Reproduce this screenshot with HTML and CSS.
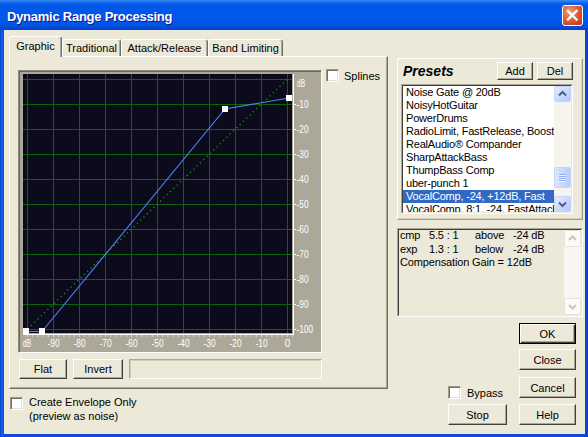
FILE: index.html
```html
<!DOCTYPE html>
<html>
<head>
<meta charset="utf-8">
<title>Dynamic Range Processing</title>
<link rel="stylesheet" href="styles.css">
</head>
<body>
<div class="window">
  <div class="titlebar">
    <span class="title">Dynamic Range Processing</span>
    <div class="close">
      <svg width="19" height="19" viewBox="0 0 19 19"><path d="M5 5 L13.5 13.5 M13.5 5 L5 13.5" stroke="#fff" stroke-width="2.4" stroke-linecap="square" fill="none"/></svg>
    </div>
  </div>
  <div class="client">
    <div class="left">
      <div class="tabs">
        <div class="tab active t-graphic">Graphic</div>
        <div class="tab t-trad">Traditional</div>
        <div class="tab t-attack">Attack/Release</div>
        <div class="tab t-band">Band Limiting</div>
      </div>
      <div class="panel">
        <div class="graph-row">
          <div class="graph">
            <svg class="plot" width="302" height="281" viewBox="0 0 302 281">
              <rect x="4" y="3" width="269" height="259" fill="#0b0b1b"/>
              <path d="M8.5 3V262M34.5 3V262M60.5 3V262M86.5 3V262M112.5 3V262M138.5 3V262M164.5 3V262M190.5 3V262M216.5 3V262M242.5 3V262M268.5 3V262" stroke="#0c650c" stroke-width="1" fill="none"/>
              <path d="M4 8.5H273M4 33.5H273M4 58.5H273M4 83.5H273M4 108.5H273M4 133.5H273M4 158.5H273M4 183.5H273M4 208.5H273M4 233.5H273M4 258.5H273" stroke="#0c650c" stroke-width="1" fill="none"/>
              <line x1="8.5" y1="258" x2="268.5" y2="8" stroke="#1b8f1b" stroke-width="1.3" stroke-dasharray="1.3 3.3"/>
              <polyline points="7,260.5 23,260.5 206,38 270,27" stroke="#4f82f5" stroke-width="1.1" fill="none"/>
              <rect x="4" y="257" width="6" height="6" fill="#fff"/>
              <rect x="20" y="257" width="6" height="6" fill="#fff"/>
              <rect x="203" y="35" width="6" height="6" fill="#fff"/>
              <rect x="267" y="24" width="6" height="6" fill="#fff"/>
              <path d="M274.5 3V264M4 263.5H275M274.5 33.5H277M274.5 58.5H277M274.5 83.5H277M274.5 108.5H277M274.5 133.5H277M274.5 158.5H277M274.5 183.5H277M274.5 208.5H277M274.5 233.5H277M274.5 258.5H277" stroke="#fff" stroke-width="1" fill="none"/>
              <line x1="8" y1="265" x2="274" y2="265" stroke="#fff" stroke-width="1" stroke-dasharray="1 4.2"/>
              <g class="lbl">
                <text x="278" y="15.5" textLength="8" lengthAdjust="spacingAndGlyphs">dB</text>
                <text x="277.5" y="36.5" textLength="12" lengthAdjust="spacingAndGlyphs">-10</text>
                <text x="277.5" y="61.5" textLength="12" lengthAdjust="spacingAndGlyphs">-20</text>
                <text x="277.5" y="86.5" textLength="12" lengthAdjust="spacingAndGlyphs">-30</text>
                <text x="277.5" y="111.5" textLength="12" lengthAdjust="spacingAndGlyphs">-40</text>
                <text x="277.5" y="136.5" textLength="12" lengthAdjust="spacingAndGlyphs">-50</text>
                <text x="277.5" y="161.5" textLength="12" lengthAdjust="spacingAndGlyphs">-60</text>
                <text x="277.5" y="186.5" textLength="12" lengthAdjust="spacingAndGlyphs">-70</text>
                <text x="277.5" y="211.5" textLength="12" lengthAdjust="spacingAndGlyphs">-80</text>
                <text x="277.5" y="236.5" textLength="12" lengthAdjust="spacingAndGlyphs">-90</text>
                <text x="277.5" y="261.5" textLength="16.5" lengthAdjust="spacingAndGlyphs">-100</text>
                <text x="4" y="275.5" textLength="8" lengthAdjust="spacingAndGlyphs">dB</text>
              </g>
              <g class="lbl mid">
                <text x="34.5" y="275.5" textLength="12" lengthAdjust="spacingAndGlyphs">-90</text>
                <text x="60.5" y="275.5" textLength="12" lengthAdjust="spacingAndGlyphs">-80</text>
                <text x="86.5" y="275.5" textLength="12" lengthAdjust="spacingAndGlyphs">-70</text>
                <text x="112.5" y="275.5" textLength="12" lengthAdjust="spacingAndGlyphs">-60</text>
                <text x="138.5" y="275.5" textLength="12" lengthAdjust="spacingAndGlyphs">-50</text>
                <text x="164.5" y="275.5" textLength="12" lengthAdjust="spacingAndGlyphs">-40</text>
                <text x="190.5" y="275.5" textLength="12" lengthAdjust="spacingAndGlyphs">-30</text>
                <text x="216.5" y="275.5" textLength="12" lengthAdjust="spacingAndGlyphs">-20</text>
                <text x="242.5" y="275.5" textLength="12" lengthAdjust="spacingAndGlyphs">-10</text>
                <text x="268.5" y="275.5">0</text>
              </g>
            </svg>
          </div>
          <div class="check splines"><span class="cbox"></span><span>Splines</span></div>
        </div>
        <div class="btn-row">
          <button class="btn w-flat">Flat</button>
          <button class="btn w-invert">Invert</button>
          <div class="field"></div>
        </div>
      </div>
      <div class="envelope">
        <span class="cbox"></span>
        <div class="env-text">Create Envelope Only<br>(preview as noise)</div>
      </div>
    </div>

    <div class="right">
      <div class="presets">
        <div class="presets-head">
          <span class="presets-title">Presets</span>
          <button class="btn small add">Add</button>
          <button class="btn small">Del</button>
        </div>
        <div class="sunken list">
          <div class="sunken-in list-in">
            <div class="items">
              <div class="item">Noise Gate @ 20dB</div>
              <div class="item">NoisyHotGuitar</div>
              <div class="item">PowerDrums</div>
              <div class="item">RadioLimit, FastRelease, Boost</div>
              <div class="item">RealAudio® Compander</div>
              <div class="item">SharpAttackBass</div>
              <div class="item">ThumpBass Comp</div>
              <div class="item">uber-punch 1</div>
              <div class="item sel">VocalComp, -24, +12dB, Fast</div>
              <div class="item">VocalComp, 8:1, -24, FastAttack</div>
            </div>
            <div class="sb">
              <div class="sb-btn"><svg width="15" height="14" viewBox="0 0 15 14"><path d="M4 8.5 L7.5 5 L11 8.5" stroke="#4d6185" stroke-width="2" fill="none"/></svg></div>
              <div class="sb-thumb"><span></span><span></span><span></span><span></span></div>
              <div class="sb-btn sb-down"><svg width="15" height="14" viewBox="0 0 15 14"><path d="M4 5.5 L7.5 9 L11 5.5" stroke="#4d6185" stroke-width="2" fill="none"/></svg></div>
            </div>
          </div>
        </div>
      </div>

      <div class="sunken info">
        <div class="sunken-in info-in">
          <div class="info-text">
            <div class="row"><span class="c1">cmp</span><span class="c2">5.5 : 1</span><span class="c3">above</span><span>-24 dB</span></div>
            <div class="row"><span class="c1">exp</span><span class="c2">1.3 : 1</span><span class="c3">below</span><span>-24 dB</span></div>
            <div class="row">Compensation Gain = 12dB</div>
          </div>
          <div class="sb dis">
            <div class="sb-btn"><svg width="15" height="15" viewBox="0 0 15 15"><path d="M4 9 L7.5 5.5 L11 9" stroke="#c9c6b8" stroke-width="2" fill="none"/></svg></div>
            <div class="sb-btn sb-down"><svg width="15" height="15" viewBox="0 0 15 15"><path d="M4 6 L7.5 9.5 L11 6" stroke="#c9c6b8" stroke-width="2" fill="none"/></svg></div>
          </div>
        </div>
      </div>

      <div class="actions">
        <div class="act-left">
          <div class="check bypass"><span class="cbox"></span><span>Bypass</span></div>
          <button class="btn w-stop">Stop</button>
        </div>
        <div class="act-right">
          <button class="btn default">OK</button>
          <button class="btn b-close">Close</button>
          <button class="btn b-cancel">Cancel</button>
          <button class="btn b-help">Help</button>
        </div>
      </div>
    </div>
  </div>
</div>
</body>
</html>
```

FILE: styles.css
```css
html, body {
  margin: 0;
  padding: 0;
  background: #ffffff;
}

body {
  font-family: "Liberation Sans", Arial, sans-serif;
  font-size: 11px;
  color: #000;
}

.window {
  width: 588px;
  height: 437px;
  display: flex;
  flex-direction: column;
  background: linear-gradient(90deg, #0840c8 0, #1560ee 2px, #0a4bd8 4px, #0a4bd8 584px, #0740c6 588px);
  overflow: hidden;
}

.titlebar {
  flex: none;
  height: 30px;
  display: flex;
  align-items: center;
  padding-left: 7px;
  background: linear-gradient(180deg, #3a8cf8 0px, #0d61ea 3px, #0056e6 6px, #0059ee 16px, #0055e5 24px, #0047d3 29px, #0040c8 30px);
}

.title {
  color: #fff;
  font-weight: bold;
  font-size: 13px;
  letter-spacing: -0.25px;
  padding-top: 2px;
  text-shadow: 1px 1px #0c1a8a;
}

.close {
  margin-left: auto;
  margin-right: 5px;
  width: 21px;
  height: 21px;
  box-sizing: border-box;
  border: 1px solid #fff;
  border-radius: 3px;
  background: radial-gradient(circle at 35% 30%, #f29a7c 0, #e0603c 45%, #c9431f 80%, #b8391a 100%);
  display: flex;
  align-items: center;
  justify-content: center;
}

.close svg { display: block; }

.client {
  flex: 1;
  margin: 0 3px 3px 4px;
  background: #ece9d8;
  display: flex;
}

/* ---------- left column ---------- */
.left {
  width: 379px;
  margin-left: 5px;
  padding-top: 6px;
  display: flex;
  flex-direction: column;
}

.tabs {
  height: 20px;
  display: flex;
  align-items: flex-end;
  position: relative;
  z-index: 2;
}

.tab {
  box-sizing: border-box;
  height: 17px;
  line-height: 16px;
  text-align: center;
  background: #ece9d8;
  border: 1px solid;
  border-bottom: 0;
  border-color: #fff #716f64 #716f64 #fff;
  border-radius: 3px 3px 0 0;
  box-shadow: inset -1px 0 #aca899;
  white-space: nowrap;
}

.tab.active {
  height: 21px;
  line-height: 18px;
  margin-bottom: -1px;
}

.t-graphic { width: 53px; }
.t-trad { width: 59px; }
.t-attack { width: 87px; }
.t-band { width: 75px; }

.panel {
  box-sizing: border-box;
  height: 333px;
  border: 1px solid;
  border-color: #fff #716f64 #716f64 #fff;
  box-shadow: inset -1px -1px #aca899;
}

.graph-row {
  display: flex;
  align-items: flex-start;
  margin: 13px 0 0 8px;
}

.graph {
  box-sizing: border-box;
  width: 304px;
  height: 283px;
  border: 1px solid;
  border-color: #8e8b7e #fff #fff #8e8b7e;
  box-shadow: inset 1px 1px #66645b;
  background: #aca899;
}

.plot { display: block; }

.lbl text {
  font-family: "Liberation Sans", Arial, sans-serif;
  font-size: 10px;
  fill: #fff;
}

.lbl.mid text { text-anchor: middle; }

.check {
  display: flex;
  align-items: center;
  gap: 5px;
}

.cbox {
  flex: none;
  display: block;
  width: 13px;
  height: 13px;
  box-sizing: border-box;
  background: #fff;
  border: 1px solid;
  border-color: #9b988a #fff #fff #9b988a;
  box-shadow: inset 1px 1px #716f64, inset -1px -1px #e4e1d3;
}

.splines {
  margin-left: 4px;
  margin-top: -1px;
}

.btn {
  box-sizing: border-box;
  height: 21px;
  padding: 0;
  margin: 0;
  font-family: "Liberation Sans", Arial, sans-serif;
  font-size: 11px;
  color: #000;
  background: #ece9d8;
  border: 1px solid;
  border-color: #fff #404040 #404040 #fff;
  box-shadow: inset -1px -1px #aca899;
  border-radius: 0;
}

.btn.default {
  border-color: #000;
  box-shadow: inset 1px 1px #fff, inset -1px -1px #404040, inset -2px -2px #aca899;
}

.btn-row {
  display: flex;
  gap: 6px;
  margin: 6px 0 0 9px;
}

.btn-row .btn { height: 20px; }

.w-flat { width: 48px; }
.w-invert { width: 50px; }

.field {
  box-sizing: border-box;
  width: 193px;
  height: 20px;
  border: 1px solid;
  border-color: #aca899 #fff #fff #aca899;
  box-shadow: inset 1px 1px #d0cdbf;
}

.envelope {
  display: flex;
  gap: 6px;
  margin: 8px 0 0 1px;
}

.env-text {
  margin-top: -2px;
  line-height: 14px;
}

/* ---------- right column ---------- */
.right {
  width: 186px;
  margin-left: 9px;
  padding-top: 28px;
  display: flex;
  flex-direction: column;
}

.presets {
  box-sizing: border-box;
  border: 1px solid;
  border-color: #fff #9d9a8c #9d9a8c #fff;
  box-shadow: inset -1px -1px #d6d3c4;
  padding: 3px 9px 5px 3px;
}

.presets-head {
  display: flex;
  align-items: center;
  gap: 4px;
  height: 18px;
}

.presets-title {
  margin-left: 2px;
  font-size: 14px;
  font-weight: bold;
  font-style: italic;
}

.btn.small {
  width: 36px;
  height: 18px;
}

.btn.add { margin-left: auto; }

.sunken {
  box-sizing: border-box;
  border: 1px solid;
  border-color: #aca899 #fff #fff #aca899;
}

.sunken-in {
  box-sizing: border-box;
  height: 100%;
  border: 1px solid;
  border-color: #404040 #ece9d8 #ece9d8 #404040;
  display: flex;
}

.list {
  margin-top: 4px;
  height: 130px;
}

.list-in { background: #fff; }

.items {
  flex: 1;
  min-width: 0;
  overflow: hidden;
}

.item {
  height: 13px;
  line-height: 13px;
  padding-left: 3px;
  white-space: nowrap;
  overflow: hidden;
  letter-spacing: -0.2px;
}

.item.sel {
  background: #316ac5;
  color: #fff;
}

.sb {
  flex: none;
  width: 17px;
  display: flex;
  flex-direction: column;
  background: #f5f4ef;
}

.sb-btn {
  box-sizing: border-box;
  height: 16px;
  border: 1px solid #c6d5fb;
  border-radius: 2px;
  background: linear-gradient(135deg, #e4ecfe 0%, #c9d8fc 55%, #b5c9f7 100%);
  display: flex;
  align-items: center;
  justify-content: center;
}

.sb-btn svg { display: block; }

.sb-down { margin-top: auto; }

.sb-thumb {
  box-sizing: border-box;
  margin-top: 65px;
  height: 21px;
  border: 1px solid #c6d5fb;
  border-radius: 2px;
  background: linear-gradient(90deg, #dce6fe 0%, #c5d6fc 60%, #b9cdf9 100%);
  display: flex;
  flex-direction: column;
  align-items: center;
  justify-content: center;
  gap: 1px;
}

.sb-thumb span {
  display: block;
  width: 7px;
  height: 1px;
  background: #8ba9ec;
  box-shadow: 0 1px #eef3ff;
}

.info {
  margin-top: 8px;
  height: 89px;
}

.info-in { background: #ece9d8; }

.info-text {
  flex: 1;
  padding-left: 1px;
  margin-top: -1px;
  line-height: 13.5px;
  white-space: nowrap;
  letter-spacing: -0.15px;
}

.row { display: flex; }
.c1 { width: 29px; }
.c2 { width: 46px; }
.c3 { width: 38px; }

.sb.dis { background: #f7f6f2; }

.sb.dis .sb-btn {
  height: 17px;
  border: 1px solid #e6e4da;
  background: #fbfbf8;
}

.actions {
  display: flex;
  justify-content: flex-end;
  gap: 12px;
  margin: 6px 7px 0 0;
}

.act-left {
  display: flex;
  flex-direction: column;
  justify-content: flex-end;
  align-items: flex-start;
}

.bypass { gap: 6px; }

.w-stop {
  width: 59px;
  margin-top: 5px;
}

.act-right {
  display: flex;
  flex-direction: column;
  width: 57px;
}

.act-right .btn { width: 57px; }
.b-close { margin-top: 5px; }
.b-cancel { margin-top: 7px; }
.b-help { margin-top: 6px; }
```
